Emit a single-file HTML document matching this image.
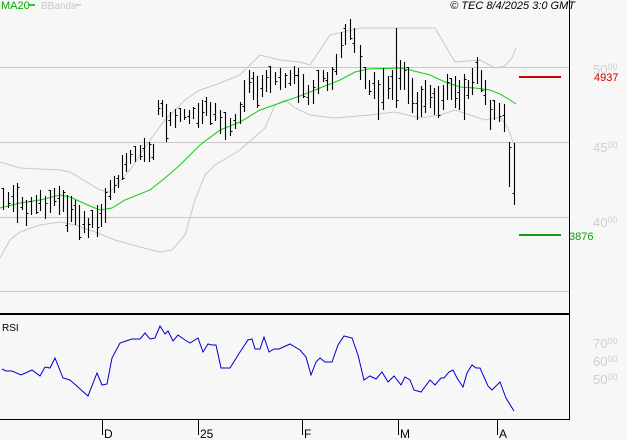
<!DOCTYPE html>
<html><head><meta charset="utf-8"><style>
html,body{margin:0;padding:0;background:#f7f7f7;width:627px;height:440px;overflow:hidden}
svg{display:block}
text{font-family:"Liberation Sans",sans-serif}
</style></head><body>
<svg id="s" width="627" height="440" xmlns="http://www.w3.org/2000/svg">
<rect width="627" height="440" fill="#f7f7f7"/>
<g stroke="#c8c8c8" stroke-width="1">
<line x1="0" y1="67.5" x2="569" y2="67.5"/>
<line x1="0" y1="142.5" x2="569" y2="142.5"/>
<line x1="0" y1="217.5" x2="569" y2="217.5"/>
<line x1="0" y1="291.5" x2="569" y2="291.5"/>
</g>
<g fill="none" stroke="#c8c8c8" stroke-width="1">
<polyline points="0,162 20,168 60,170 70,172 100,190 110,192 130,170 150,140 165,120 185,100 200,90 215,85 240,75 260,55 280,60 300,62 310,65 330,35 360,28 400,28 435,28 445,45 455,62 480,60 495,68 505,66 512,58 516,48"/>
<polyline points="0,258 10,240 20,232 40,225 60,222 75,225 95,232 115,240 140,247 160,252 172,250 185,235 195,200 205,175 215,165 240,150 265,128 275,105 285,100 295,108 310,115 335,118 370,115 395,112 420,118 440,115 455,110 470,115 485,120 500,117 508,128 514,145"/>
</g>
<polyline fill="none" stroke="#11cc11" stroke-width="1" points="0,208 20,203 40,200 60,195 70,197 90,206 100,210 112,208 125,200 150,190 165,178 180,165 200,145 220,130 240,122 260,110 280,103 300,96 320,88 340,80 355,72 368,69 400,68 410,70 430,75 445,82 460,87 475,88 490,90 500,94 510,100 516,104"/>
<g id="bars" stroke="#000" stroke-width="1.1"></g>
<line x1="0" y1="314" x2="569" y2="314" stroke="#000" stroke-width="2"/>
<line x1="569.5" y1="0" x2="569.5" y2="420" stroke="#000" stroke-width="1"/>
<line x1="0" y1="419.5" x2="570" y2="419.5" stroke="#000" stroke-width="1"/>
<g stroke="#000" stroke-width="1">
<line x1="102.5" y1="420" x2="102.5" y2="435"/>
<line x1="198.5" y1="420" x2="198.5" y2="435"/>
<line x1="302.5" y1="420" x2="302.5" y2="435"/>
<line x1="398.5" y1="420" x2="398.5" y2="435"/>
<line x1="497.5" y1="420" x2="497.5" y2="435"/>
</g>
<g font-size="12" fill="#000">
<text x="104" y="438">D</text><text x="200" y="438">25</text><text x="304" y="438">F</text><text x="400" y="438">M</text><text x="499" y="438">A</text>
</g>
<polyline fill="none" stroke="#0000cc" stroke-width="1" points="2,369 6,371 12,371 21,375 32,370 40,376 45,367 50,368 55,358 63,378 70,380 88,396 97,373 102,385 107,384 112,358 120,343 132,339 140,339 145,333 150,339 155,338 160,326 165,334 168,331 173,341 178,335 185,340 190,343 198,338 203,352 208,344 212,345 216,345 221,368 230,368 240,352 248,340 252,339 255,349 260,349 264,337 269,352 274,349 279,349 290,344 300,350 306,357 311,375 316,362 320,358 325,362 332,362 338,345 344,336 352,338 358,355 364,380 370,376 376,379 382,372 388,382 394,376 401,385 405,377 410,380 414,390 421,392 430,380 435,385 441,378 444,378 449,372 453,370 457,378 463,387 467,373 472,365 476,368 480,368 488,386 492,390 500,382 506,398 514,411"/>
<text x="2" y="331" font-size="10" fill="#000">RSI</text>
<g fill="#cfcfcf">
<text x="593" y="348" font-size="13">70<tspan font-size="9" dy="-4">00</tspan></text>
<text x="593" y="366" font-size="13">60<tspan font-size="9" dy="-4">00</tspan></text>
<text x="593" y="384" font-size="13">50<tspan font-size="9" dy="-4">00</tspan></text>
<text x="593" y="74" font-size="13">50<tspan font-size="9" dy="-4">00</tspan></text>
<text x="593" y="152" font-size="13">45<tspan font-size="9" dy="-4">00</tspan></text>
<text x="593" y="227" font-size="13">40<tspan font-size="9" dy="-4">00</tspan></text>
</g>
<line x1="519" y1="77" x2="561" y2="77" stroke="#cc0000" stroke-width="2"/>
<text x="594" y="81" font-size="11" fill="#cc0000">4937</text>
<line x1="519" y1="235" x2="561" y2="235" stroke="#119911" stroke-width="2"/>
<text x="569" y="240" font-size="11" fill="#119911">3876</text>
<text x="1" y="9" font-size="11" fill="#00aa00">MA20</text>
<line x1="29" y1="5" x2="35" y2="5" stroke="#00aa00" stroke-width="1.5"/>
<text x="41" y="9" font-size="10" fill="#c8c8c8">BBands</text>
<line x1="75" y1="5" x2="81" y2="5" stroke="#c8c8c8" stroke-width="1.5"/>
<text x="575" y="9" font-size="11" font-style="italic" fill="#000" text-anchor="end">© TEC 8/4/2025 3:0 GMT</text>
</svg>
<script>
var b=[[3,188,210],[8,192,208],[13,185,212],[17,183,223],[22,197,210],[26,200,226],[31,197,215],[36,195,214],[40,190,211],[45,196,219],[50,190,213],[54,188,206],[59,186,215],[63,190,212],[67,195,232],[71,196,222],[75,200,225],[79,205,240],[84,211,233],[88,218,238],[92,210,228],[97,205,237],[101,204,227],[105,188,223],[110,180,200],[114,176,193],[118,175,188],[122,155,180],[126,153,172],[130,150,164],[135,146,162],[140,145,160],[144,138,162],[149,142,162],[153,144,160],[158,100,115],[162,100,117],[166,104,142],[170,112,126],[175,109,128],[180,108,122],[184,109,120],[189,110,124],[193,107,119],[198,103,128],[202,100,124],[206,97,116],[210,102,125],[215,103,121],[220,110,134],[225,112,140],[230,118,136],[235,114,129],[240,102,124],[244,80,112],[249,70,93],[253,72,100],[257,76,108],[262,75,97],[266,70,92],[270,66,93],[275,72,85],[280,68,90],[285,73,88],[290,70,86],[294,66,84],[298,68,103],[303,74,98],[308,85,105],[313,80,104],[318,70,94],[323,70,82],[327,72,91],[332,67,90],[336,54,75],[341,32,58],[345,24,45],[350,19,40],[354,28,53],[360,45,80],[365,67,89],[369,80,95],[374,72,99],[378,80,120],[383,68,110],[388,76,99],[392,70,100],[396,28,108],[400,60,90],[404,62,90],[408,67,104],[412,78,113],[417,92,120],[421,86,117],[425,80,113],[430,85,108],[434,88,115],[438,86,118],[443,85,110],[447,74,100],[451,78,100],[455,76,108],[459,80,110],[464,74,120],[468,80,99],[472,68,95],[477,57,84],[481,70,92],[485,80,105],[490,100,130],[494,100,120],[499,103,122],[504,104,132],[509,142,187],[514,143,205]];
var h='';b.forEach(function(a,i){var x=a[0]+.5,c=Math.round(a[1]+(a[2]-a[1])*((i*37%10)/10))+.5;
h+='<line x1="'+x+'" y1="'+a[1]+'" x2="'+x+'" y2="'+a[2]+'"/>';
var d=(i%2)?2:-2;h+='<line x1="'+x+'" y1="'+c+'" x2="'+(x+d)+'" y2="'+c+'" stroke-width="1"/>';});
document.getElementById('bars').innerHTML=h;
</script>
</body></html>
